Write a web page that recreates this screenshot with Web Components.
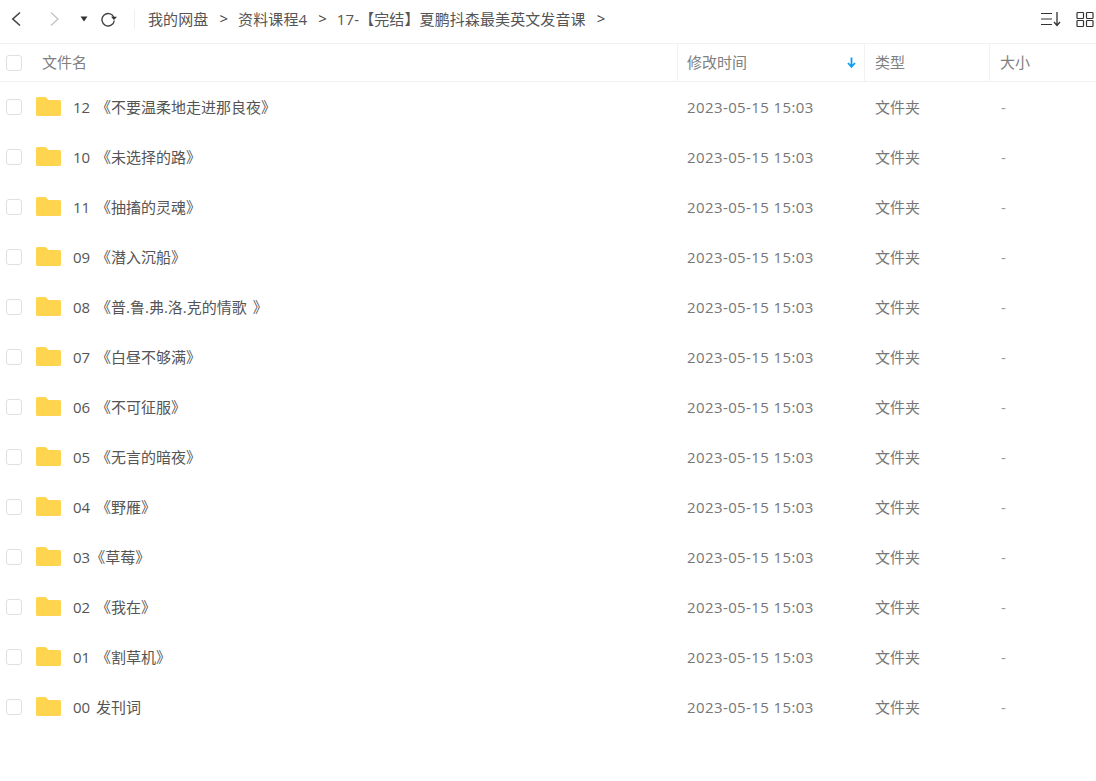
<!DOCTYPE html>
<html lang="zh">
<head>
<meta charset="utf-8">
<title>文件列表</title>
<style>
  html, body { margin: 0; padding: 0; background: #fff; }
  body { font-family: "Open Sans", "Noto Sans CJK SC", sans-serif; font-size: 15px; color: #666; }
</style>
</head>
<body>
<file-browser>
  <path-bar>
    <path-crumb>我的网盘</path-crumb>
    <path-crumb>资料课程4</path-crumb>
    <path-crumb>17-【完结】夏鹏抖森最美英文发音课</path-crumb>
  </path-bar>
  <list-header></list-header>
  <folder-row name="12 《不要温柔地走进那良夜》"></folder-row>
  <folder-row name="10 《未选择的路》"></folder-row>
  <folder-row name="11 《抽搐的灵魂》"></folder-row>
  <folder-row name="09 《潜入沉船》"></folder-row>
  <folder-row name="08 《普.鲁.弗.洛.克的情歌 》"></folder-row>
  <folder-row name="07 《白昼不够满》"></folder-row>
  <folder-row name="06 《不可征服》"></folder-row>
  <folder-row name="05 《无言的暗夜》"></folder-row>
  <folder-row name="04 《野雁》"></folder-row>
  <folder-row name="03《草莓》"></folder-row>
  <folder-row name="02 《我在》"></folder-row>
  <folder-row name="01 《割草机》"></folder-row>
  <folder-row name="00 发刊词"></folder-row>
</file-browser>

<script>
const columns = '677px 187px 125px 1fr';

class FileBrowser extends HTMLElement {
  constructor() {
    super();
    this.shadowDOM = this.attachShadow({ mode: 'open' });
  }

  connectedCallback() {
    this.shadowDOM.innerHTML = `
      <style>
        :host { display: flex; flex-direction: column; width: 1096px; height: 781px; overflow: hidden; }
      </style>
      <slot></slot>
    `;
  }
}

class PathBar extends HTMLElement {
  constructor() {
    super();
    this.shadowDOM = this.attachShadow({ mode: 'open' });
  }

  connectedCallback() {
    this.shadowDOM.innerHTML = `
      <style>
        :host {
          display: flex;
          align-items: center;
          box-sizing: border-box;
          height: 44px;
          padding: 0 2px 5px 10px;
          border-bottom: 1px solid #f2f2f2;
          flex: none;
        }
        svg { display: block; flex: none; }
        .nav { display: flex; align-items: center; }
        .divider { width: 1px; height: 20px; background: #eee; margin: 0 13px 0 16px; }
        .crumbs { display: flex; align-items: center; flex: 1; padding-bottom: 2px; letter-spacing: .1px; }
        .tools { display: flex; align-items: center; gap: 14px; }
      </style>
      <div class="nav">
        <svg width="12" height="16" viewBox="0 0 12 16" fill="none" stroke="#444" stroke-width="1.6"><path d="M10 1.500 2.800 8l7.200 6.500"/></svg>
        <svg style="margin-left:27px" width="11" height="16" viewBox="0 0 11 16" fill="none" stroke="#c4c4c4" stroke-width="1.4"><path d="M2 1.500 9 8l-7 6.500"/></svg>
        <svg style="margin-left:20px" width="8" height="6" viewBox="0 0 8 6"><path d="M0.500 0.500h7L4 5.500z" fill="#333"/></svg>
        <svg style="margin-left:12px" width="18" height="16" viewBox="0 0 18 16" fill="none"><path d="M13.800 6.200A6.200 6.200 0 1 0 14.300 9.500" stroke="#444" stroke-width="1.4"/><path d="M11 5.800h6l-3 3.200z" fill="#333"/></svg>
        <div class="divider"></div>
      </div>
      <div class="crumbs"><slot></slot></div>
      <div class="tools">
        <svg width="22" height="16" viewBox="0 0 22 16" fill="none" stroke="#333" stroke-width="1.200"><path d="M1 2.500h11M1 8h11M1 13.500h11"/><path d="M17 1v13.500M14 11l3 3.400 3-3.400" stroke-width="1.300"/></svg>
        <svg width="18" height="17" viewBox="0 0 18 17" fill="none" stroke="#333" stroke-width="1.200"><rect x="1" y="1.500" width="6.500" height="6" rx=".8"/><rect x="10.500" y="1.500" width="6.500" height="6" rx=".8"/><rect x="1" y="9.500" width="6.500" height="6" rx=".8"/><rect x="10.500" y="9.500" width="6.500" height="6" rx=".8"/></svg>
      </div>
    `;
  }
}

class PathCrumb extends HTMLElement {
  constructor() {
    super();
    this.shadowDOM = this.attachShadow({ mode: 'open' });
  }

  connectedCallback() {
    this.shadowDOM.innerHTML = `
      <style>
        :host { display: inline-flex; align-items: center; color: #555; white-space: nowrap; }
        .sep { margin: 0 10px 0 11px; color: #444; }
      </style>
      <slot></slot><span class="sep">&gt;</span>
    `;
  }
}

class CheckBox extends HTMLElement {
  constructor() {
    super();
    this.shadowDOM = this.attachShadow({ mode: 'open' });
    this.shadowDOM.innerHTML = `
      <style>
        :host { display: block; width: 16px; height: 16px; box-sizing: border-box; border: 1px solid #e0e0e0; border-radius: 3px; background: #fff; }
      </style>
    `;
  }
}

class ListHeader extends HTMLElement {
  constructor() {
    super();
    this.shadowDOM = this.attachShadow({ mode: 'open' });
  }

  connectedCallback() {
    this.shadowDOM.innerHTML = `
      <style>
        :host {
          display: grid;
          grid-template-columns: ${columns};
          height: 37px;
          border-bottom: 1px solid #f2f2f2;
          color: #808080;
          flex: none;
        }
        .cell { display: flex; align-items: center; padding: 0 0 3px 10px; border-left: 1px solid #f2f2f2; }
        .cell.name { padding: 0 0 0 6px; border-left: none; gap: 20px; }
        .cell.name span { padding-bottom: 3px; }
        .cell.time { justify-content: space-between; padding: 0 8px 0 9px; }
        .cell.time span { padding-bottom: 3px; }
        svg { display: block; }
      </style>
      <div class="cell name"><check-box></check-box><span>文件名</span></div>
      <div class="cell time"><span>修改时间</span>
        <svg width="9" height="11" viewBox="0 0 9 11" fill="none" stroke="#0d9cf2" stroke-width="1.800"><path d="M4.500 .5v9M1 6l3.500 3.800L8 6"/></svg>
      </div>
      <div class="cell">类型</div>
      <div class="cell">大小</div>
    `;
  }
}

class FolderRow extends HTMLElement {
  constructor() {
    super();
    this.shadowDOM = this.attachShadow({ mode: 'open' });
  }

  connectedCallback() {
    this.shadowDOM.innerHTML = `
      <style>
        :host {
          display: grid;
          grid-template-columns: ${columns};
          height: 50px;
          align-items: center;
          color: #666;
          flex: none;
        }
        .name { display: flex; align-items: center; padding-left: 6px; color: #555; }
        .name svg { display: block; margin: 0 12px 0 14px; flex: none; position: relative; top: -1px; }
        .name span { padding-bottom: 2px; word-spacing: 2px; }
        .cell { padding-left: 10px; color: #777; }
        .date { letter-spacing: .4px; }
        .type { padding-left: 11px; padding-bottom: 2px; }
        .dash { padding-left: 12px; color: #999; }
      </style>
      <div class="name">
        <check-box></check-box>
        <svg width="25" height="19" viewBox="0 0 25 19"><path d="M1.500 0H8.500c1 0 1.500.3 2.200 1L12.500 3h11A1.500 1.500 0 0 1 25 4.500v13a1.500 1.500 0 0 1-1.500 1.500h-22A1.500 1.500 0 0 1 0 17.500v-16A1.500 1.500 0 0 1 1.500 0z" fill="#ffd54f"/></svg>
        <span>${this.getAttribute('name')}</span>
      </div>
      <div class="cell date">2023-05-15 15:03</div>
      <div class="cell type">文件夹</div>
      <div class="cell dash">-</div>
    `;
  }
}

customElements.define('check-box', CheckBox);
customElements.define('file-browser', FileBrowser);
customElements.define('path-bar', PathBar);
customElements.define('path-crumb', PathCrumb);
customElements.define('list-header', ListHeader);
customElements.define('folder-row', FolderRow);
</script>
</body>
</html>
